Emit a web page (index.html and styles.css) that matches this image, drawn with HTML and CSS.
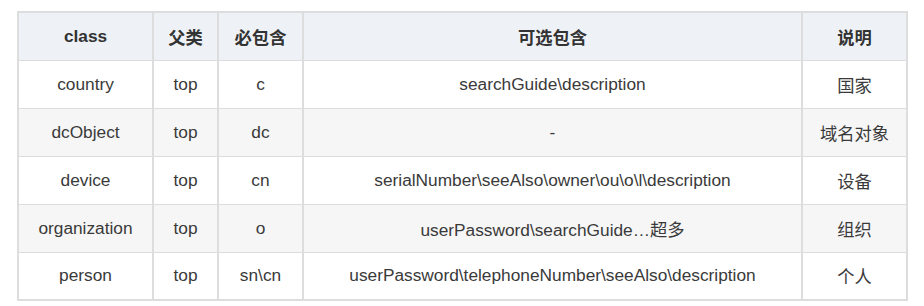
FILE: index.html
```html
<!DOCTYPE html>
<html lang="zh-CN">
<head>
    <meta charset="UTF-8">
    <title>LDAP objectClass</title>
    <link rel="stylesheet" href="styles.css">
</head>
<body>
    <table class="class-table">
        <colgroup>
            <col class="col-class">
            <col class="col-parent">
            <col class="col-must">
            <col class="col-may">
            <col class="col-desc">
        </colgroup>
        <thead>
            <tr>
                <th>class</th>
                <th>父类</th>
                <th>必包含</th>
                <th>可选包含</th>
                <th>说明</th>
            </tr>
        </thead>
        <tbody>
            <tr>
                <td>country</td>
                <td>top</td>
                <td>c</td>
                <td>searchGuide\description</td>
                <td>国家</td>
            </tr>
            <tr>
                <td>dcObject</td>
                <td>top</td>
                <td>dc</td>
                <td>-</td>
                <td>域名对象</td>
            </tr>
            <tr>
                <td>device</td>
                <td>top</td>
                <td>cn</td>
                <td>serialNumber\seeAlso\owner\ou\o\l\description</td>
                <td>设备</td>
            </tr>
            <tr>
                <td>organization</td>
                <td>top</td>
                <td>o</td>
                <td>userPassword\searchGuide…超多</td>
                <td>组织</td>
            </tr>
            <tr>
                <td>person</td>
                <td>top</td>
                <td>sn\cn</td>
                <td>userPassword\telephoneNumber\seeAlso\description</td>
                <td>个人</td>
            </tr>
        </tbody>
    </table>
</body>
</html>
```

FILE: styles.css
```css
* {
    margin: 0;
    padding: 0;
    box-sizing: border-box;
}

body {
    font-family: "Liberation Sans", Arial, "Noto Sans CJK SC", sans-serif;
    font-size: 17.3px;
    color: #3a3a3a;
    background: #fff;
    padding: 11px 0 0 17px;
}

.class-table {
    width: 889px;
    table-layout: fixed;
    border-collapse: collapse;
    border: 2px solid #dddddd;
}

.col-class { width: 135px; }
.col-parent { width: 65px; }
.col-must { width: 85px; }
.col-may { width: 499px; }
.col-desc { width: 105px; }

.class-table th,
.class-table td {
    height: 48px;
    text-align: center;
    vertical-align: middle;
    border-left: 2px solid #dddddd;
    border-right: 2px solid #dddddd;
    border-top: 1px solid #dddddd;
    border-bottom: 1px solid #dddddd;
    white-space: nowrap;
}

.class-table th {
    background: #eef2f6;
    font-weight: 700;
    color: #333;
}

.class-table tbody tr:nth-child(even) td {
    background: #f6f6f6;
}
```
